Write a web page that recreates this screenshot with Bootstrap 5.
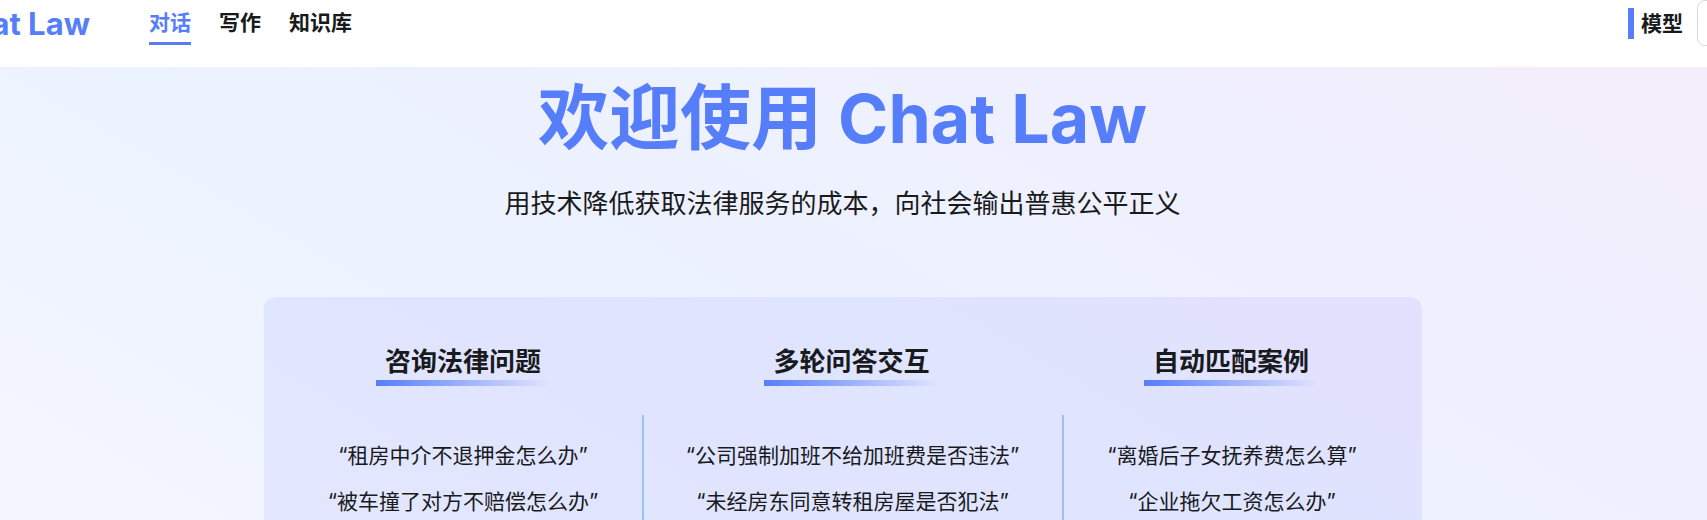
<!DOCTYPE html>
<html lang="zh-CN">
<head>
<meta charset="utf-8">
<meta name="viewport" content="width=device-width, initial-scale=1">
<title>Chat Law</title>
<link href="https://cdn.jsdelivr.net/npm/bootstrap@5.3.0/dist/css/bootstrap.min.css" rel="stylesheet">
<style>
:root { --brand: #567dfa; --ink: #191a1c; }
body { font-family: Inter, "Noto Sans CJK SC", sans-serif; color: var(--ink); font-size: 21px; }
.topbar { height: 67px; }
.topbar-row { height: 46px; }
.brand-box { width: 90px; margin-right: 59px; }
.brand-link { font-size: 31px; line-height: 50px; padding-top: 2px; color: var(--brand); }
.menu { gap: 28px; }
.menu a { color: var(--ink); line-height: 30px; padding: 6px 0 4px; border-bottom: 3px solid transparent; }
.menu a.active { color: var(--brand); border-color: var(--brand); }
.model-label { border-left: 6px solid var(--brand); padding-left: 7px; line-height: 31px; margin-right: 14px; }
.model-select { width: 180px; height: 46px; margin-right: -170px; border-color: #d9d9d9; border-radius: 8px; }
.hero {
  padding: 2px 22px 0 0;
  background: linear-gradient(30deg, #f4f6ff 0%, #eff4ff 24%, #ebf3ff 37%, #edf1fe 48%, #eef1fe 62%, #f0effd 76%, #f3eefc 100%);
}
.hero-title { font-size: 71px; line-height: 96px; color: var(--brand); }
.hero-name { font-size: 68px; line-height: 1; }
.hero-sub { font-size: 26px; line-height: 36px; margin: 21px 0 75px; }
.panel { width: 100%; max-width: 1158px; padding: 45px 21px 0; border-radius: 12px;
  background: linear-gradient(30deg, #e3e8ff 0%, #e0e4ff 35%, #dfe4ff 65%, #e2e1fe 90%); }
.topics { grid-template-columns: 357fr 420fr 339fr; }
.topic-title { font-size: 26px; line-height: 40px; padding: 0 9px 4px; margin-bottom: 29px;
  background: linear-gradient(90deg, var(--brand), #567dfa00) bottom / 100% 6px no-repeat; }
.samples { padding-top: 18px; }
.samples li { line-height: 46px; }
.topic + .topic .samples { border-left: 2px solid #9bc1f8; }
</style>
</head>
<body>
<div class="vh-100 d-flex flex-column overflow-hidden">
  <header class="topbar bg-white flex-shrink-0">
    <div class="topbar-row d-flex align-items-center">
      <div class="brand-box d-flex justify-content-end overflow-hidden flex-shrink-0">
        <a class="brand-link fw-bold text-decoration-none text-nowrap" href="#">Chat Law</a>
      </div>
      <nav class="menu d-flex fw-bold">
        <a class="active text-decoration-none" href="#" aria-current="page">对话</a>
        <a class="text-decoration-none" href="#">写作</a>
        <a class="text-decoration-none" href="#">知识库</a>
      </nav>
      <label class="model-label fw-bold ms-auto text-nowrap" for="model">模型</label>
      <select class="model-select form-select flex-shrink-0" id="model"></select>
    </div>
  </header>
  <main class="hero flex-grow-1 d-flex flex-column align-items-center text-center">
    <h1 class="hero-title fw-bold mb-0">欢迎使用<span class="hero-name"> Chat Law</span></h1>
    <p class="hero-sub">用技术降低获取法律服务的成本，向社会输出普惠公平正义</p>
    <div class="panel rounded-bottom-0 flex-grow-1 d-flex">
      <div class="topics d-grid w-100">
        <section class="topic d-flex flex-column align-items-center">
          <h2 class="topic-title fw-bold">咨询法律问题</h2>
          <ul class="samples list-unstyled w-100 flex-grow-1 mb-0 text-nowrap">
            <li>“租房中介不退押金怎么办”</li>
            <li>“被车撞了对方不赔偿怎么办”</li>
          </ul>
        </section>
        <section class="topic d-flex flex-column align-items-center">
          <h2 class="topic-title fw-bold">多轮问答交互</h2>
          <ul class="samples list-unstyled w-100 flex-grow-1 mb-0 text-nowrap">
            <li>“公司强制加班不给加班费是否违法”</li>
            <li>“未经房东同意转租房屋是否犯法”</li>
          </ul>
        </section>
        <section class="topic d-flex flex-column align-items-center">
          <h2 class="topic-title fw-bold">自动匹配案例</h2>
          <ul class="samples list-unstyled w-100 flex-grow-1 mb-0 text-nowrap">
            <li>“离婚后子女抚养费怎么算”</li>
            <li>“企业拖欠工资怎么办”</li>
          </ul>
        </section>
      </div>
    </div>
  </main>
</div>
<script src="https://cdn.jsdelivr.net/npm/bootstrap@5.3.0/dist/js/bootstrap.bundle.min.js"></script>
</body>
</html>
